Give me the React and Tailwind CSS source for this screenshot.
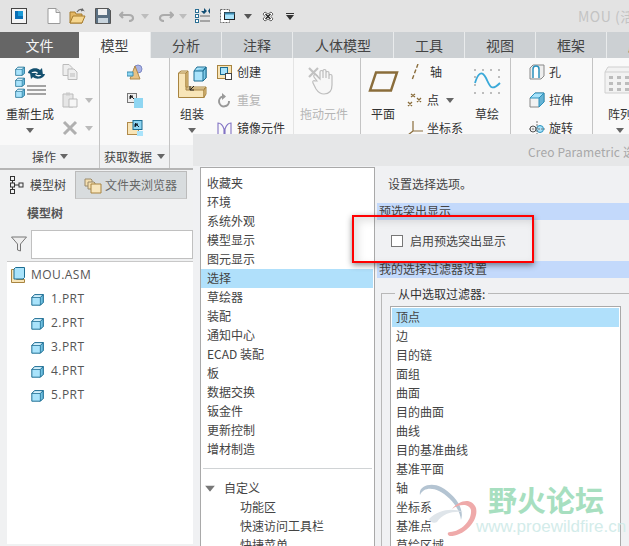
import React from "react";

const Cube = ({ s = 16, front = "#a9e3fb", top = "#d8f3fe", side = "#6fc0e0", stroke = "#1c6d92" }) => (
  <svg width={s} height={s} viewBox="0 0 16 16" className="block shrink-0">
    <path d="M1 5.500 4.500 2H15v9.500L11.500 15H1z" fill={front} stroke={stroke} strokeWidth="1.200" />
    <path d="M1 5.500 4.500 2H15l-3.500 3.500z" fill={top} stroke={stroke} strokeWidth="1" />
    <path d="M11.500 5.500 15 2v9.500L11.500 15z" fill={side} stroke={stroke} strokeWidth="1" />
  </svg>
);
const Caret = ({ c = "#666", className = "" }) => (
  <svg width="8" height="5" viewBox="0 0 8 5" className={"block shrink-0 " + className}><path d="M0 0h8L4 5z" fill={c} /></svg>
);
const Big = ({ w, label, icon, caret, gray, iconClass = "" }) => (
  <div className="flex flex-col items-center shrink-0" style={{ width: w }}>
    <div className={"h-[47px] flex items-center justify-center " + iconClass}>{icon}</div>
    <div className={"h-[18px] leading-[18px] whitespace-nowrap " + (gray ? "text-[#b5b5b5]" : "text-[#333]")}>{label}</div>
    {caret && <Caret className="mt-[5px]" />}
  </div>
);
const Row = ({ icon, label, gray, caret, gap = "gap-[5px]" }) => (
  <div className={"h-[28px] flex items-center whitespace-nowrap " + gap}>
    {icon}
    <span className={gray ? "text-[#b5b5b5]" : "text-[#333]"}>{label}</span>
    {caret && <Caret className="ml-[2px]" />}
  </div>
);

const Toolbar = () => (
  <div className="h-[32px] bg-[#e3e3e3] flex items-center pl-[11px] relative">
    <svg width="16" height="16" viewBox="0 0 16 16" className="shrink-0"><rect x=".5" y=".5" width="15" height="15" fill="#f5f5f5" stroke="#444" /><rect x="4" y="3" width="8" height="8" fill="#1a9ad6" /><path d="M4 11h8V8H7V3H4z" fill="#0a6fb5"/></svg>
    <div className="w-px h-[24px] bg-[#b3b3b3] ml-[12px]" />
    <svg width="14" height="16" viewBox="0 0 14 16" className="ml-[8px] shrink-0"><path d="M1 .5h8l4 4v11H1z" fill="#fff" stroke="#9a9a9a" /><path d="M9 .5v4h4" fill="#e5e5e5" stroke="#9a9a9a" /></svg>
    <svg width="17" height="16" viewBox="0 0 17 16" className="ml-[8px] shrink-0"><path d="M1 4h5l1 2h6v9H1z" fill="#e3b765" stroke="#a67c2e" /><path d="M1 15l3-7h12l-3 7z" fill="#f6d68e" stroke="#a67c2e" /><path d="M8 4c2-3 4-3 6-2l-1-1.500M14 2l-2 1" fill="none" stroke="#666" strokeWidth="1.200" /></svg>
    <svg width="16" height="16" viewBox="0 0 16 16" className="ml-[9px] shrink-0"><path d="M.5.500h13l2 2v13H.5z" fill="#5b7082" stroke="#555" /><rect x="3" y="1" width="9" height="6" fill="#f0f0f0" /><rect x="3" y="10" width="10" height="5" fill="#c8d4dd" /></svg>
    <svg width="16" height="12" viewBox="0 0 16 12" className="ml-[8px] shrink-0"><path d="M4 2 1 5l3 3M1.500 5H10c3 0 4 2 4 3.500S12 11 10 11" fill="none" stroke="#ababab" strokeWidth="2.200" /></svg>
    <Caret c="#bdbdbd" className="ml-[6px]" />
    <svg width="16" height="12" viewBox="0 0 16 12" className="ml-[9px] shrink-0"><path d="M12 2l3 3-3 3M14.500 5H6C3 5 2 7 2 8.500S4 11 6 11" fill="none" stroke="#ababab" strokeWidth="2.200" /></svg>
    <Caret c="#bdbdbd" className="ml-[5px]" />
    <svg width="16" height="16" viewBox="0 0 16 16" className="ml-[8px] shrink-0"><g fill="#fff" stroke="#2a6f94"><rect x=".5" y="1.500" width="3" height="3"/><rect x=".5" y="6.500" width="3" height="3"/><rect x=".5" y="11.500" width="3" height="3"/></g><path d="M5 8h10M5 13h10" stroke="#666" /><path d="M6 3h3V0l3 3-3 3zM15 0v6l-2-3z" fill="#124f75"/></svg>
    <svg width="15" height="15" viewBox="0 0 15 15" className="ml-[9px] shrink-0"><rect x=".5" y=".5" width="9" height="13" fill="#fff" stroke="#666" strokeDasharray="2 1" /><rect x="4.500" y="3.500" width="10" height="7" fill="#a9e3fb" stroke="#222" /><path d="M4.500 3.500h10v2h-10z" fill="#3d8ab0"/></svg>
    <Caret c="#555" className="ml-[9px]" />
    <svg width="12" height="11" viewBox="0 0 12 11" className="ml-[10px] shrink-0"><path d="M1 3l2-2 3 2 3-2 2 2-2 2.500 2 2.500-2 2-3-2-3 2-2-2 2-2.500z" fill="#fff" stroke="#666" /><path d="M3.500 3l5 5M8.500 3l-5 5" stroke="#222" strokeWidth="1.400" /></svg>
    <div className="w-px h-[24px] bg-[#b3b3b3] ml-[5px]" />
    <div className="ml-[7px] flex flex-col items-center gap-[1px]"><div className="w-[8px] h-px bg-[#333]" /><Caret c="#333" /></div>
    <div className="ml-[284px] text-[#c3c3c3] text-[14px] whitespace-nowrap tracking-[0.5px]">MOU (活</div>
  </div>
);

const Tab = ({ w, label, active }) => (
  <div className={"h-[26px] flex items-center justify-center shrink-0 text-[14px] text-[#444] " + (active ? "bg-[#f9f9f9]" : "bg-[#ccd0d3]")} style={{ width: w }}>{label}</div>
);
const Tabs = () => (
  <div className="h-[26px] flex gap-px bg-[#e9ebec] whitespace-nowrap">
    <div className="w-[79px] -mr-px bg-[#666] text-[#f5f5f5] text-[14px] flex items-center justify-center shrink-0">文件</div>
    <Tab w={71} label="模型" active />
    <Tab w={70} label="分析" /><Tab w={70} label="注释" /><Tab w={100} label="人体模型" />
    <Tab w={70} label="工具" /><Tab w={70} label="视图" /><Tab w={70} label="框架" /><Tab w={70} label="应用" />
  </div>
);

const Ribbon = () => (
  <div className="h-[87px] bg-[#f9f9f9] flex overflow-hidden text-[12px]">
    <div className="w-[100px] shrink-0 border-r border-[#c4c4c4] flex pl-[5px]">
      <Big w={50} label="重新生成" caret icon={
        <div className="flex gap-[2px]">
          <div className="flex flex-col gap-[1px]"><Cube s={10} /><Cube s={10} /><Cube s={10} /></div>
          <svg width="19" height="31" viewBox="0 0 19 31" className="shrink-0"><path d="M1 7c1-5 9-6 12-3l2-2 1 7h-7l2-2c-2-2-6-2-7 1zM18 8c-1 5-9 6-12 3l-2 2-1-6h7l-2 2c2 2 6 2 7-1z" fill="#14506f"/><path d="M0 20h19M0 24h19M0 28h19" stroke="#a3a3a3" strokeWidth="1.800"/></svg>
        </div>
      } />
      <div className="ml-[7px] text-[#999]">
        <div className="h-[28px] flex items-center"><svg width="16" height="16" viewBox="0 0 16 16"><path d="M1 .5h6l3 3v8H1z" fill="#eee" stroke="#bbb"/><path d="M6 5h6l3 3v7.500H6z" fill="#eee" stroke="#bbb"/><path d="M8 10h5M8 12h5" stroke="#bbb"/></svg></div>
        <div className="h-[28px] flex items-center gap-[7px]"><svg width="16" height="16" viewBox="0 0 16 16"><path d="M1 2h10v13H1z" fill="#e6e6e6" stroke="#bbb"/><rect x="4" y=".5" width="4" height="3" fill="#ccc"/><path d="M7 7h8v8H7z" fill="#f6f6f6" stroke="#bbb"/></svg><Caret c="#bbb" /></div>
        <div className="h-[28px] flex items-center gap-[7px]"><svg width="16" height="16" viewBox="0 0 16 16"><path d="M2 2l12 12M14 2 2 14" stroke="#b0b0b0" strokeWidth="3"/></svg><Caret c="#bbb" /></div>
      </div>
    </div>
    <div className="w-[70px] shrink-0 border-r border-[#c4c4c4] flex flex-col items-center">
      <div className="h-[28px] flex items-center"><svg width="16" height="16" viewBox="0 0 16 16"><circle cx="11" cy="5" r="4" fill="#aab4e6" stroke="#7f89c4"/><path d="M8 2 3 15h10z" fill="#e8c284" stroke="#b08a4a"/><path d="M0 8h6v4H0z" fill="#8fd6f2" stroke="#3b8db0"/></svg></div>
      <div className="h-[28px] flex items-center"><svg width="16" height="16" viewBox="0 0 16 16"><rect x=".5" y="1.500" width="9" height="9" fill="#eee" stroke="#777"/><path d="M3 3l4 4M3 7V4h3" stroke="#222"/><rect x="7" y="6" width="9" height="10" fill="#8fd6f2"/></svg></div>
      <div className="h-[28px] flex items-center"><svg width="16" height="16" viewBox="0 0 16 16"><rect x=".5" y="2.500" width="11" height="12" fill="#f8e5b8" stroke="#b08a4a"/><rect x="6" y=".5" width="9" height="9" fill="#8fd6f2" stroke="#1c6d92"/><path d="M8 3l4 4M8 7V4h3" stroke="#123"/><rect x="10" y="11" width="6" height="5" fill="#a9e3fb"/></svg></div>
    </div>
    <div className="w-[191px] shrink-0 border-r border-[#c4c4c4] flex">
      <Big w={44} label="组装" caret icon={
        <svg width="29" height="32" viewBox="0 0 29 32"><path d="M.5 7 3 5h7l-2 2v14h20l-2 2H8" fill="#fbeec8" stroke="#a88440"/><path d="M.5 7H8v17h18v7.500H.5z" fill="#f8e5b8" stroke="#a88440"/><path d="M26 24l2-3v7l-2 3.500z" fill="#e6c98a" stroke="#a88440"/><path d="M8 7l2-2v16H8z" fill="#e6c98a" stroke="#a88440"/><path d="M16 5l3-4h9v11l-3 3h-9z" fill="#a9e3fb" stroke="#1c6d92"/><path d="M25 15V5l3-4v11zM16 5h9l3-4" fill="#7cc8e6" stroke="#1c6d92"/><path d="M12 24l4-4M12 20v4h4" stroke="#222" fill="none"/></svg>
      } />
      <div className="w-[77px] ml-[3px] border-r border-[#e4e4e4] shrink-0">
        <Row label="创建" icon={<svg width="15" height="15" viewBox="0 0 15 15" className="shrink-0"><rect x=".5" y=".5" width="14" height="13" fill="#f8e5b8" stroke="#a88440"/><rect x="3.500" y="2.500" width="7" height="7" fill="#a9e3fb" stroke="#1c6d92"/><rect x="8.500" y="8.500" width="6" height="6" fill="#fff" stroke="#444"/></svg>} />
        <Row gray label="重复" icon={<svg width="15" height="15" viewBox="0 0 15 15" className="shrink-0"><path d="M6 3.500A5 5 0 1 0 12 8" fill="none" stroke="#999" strokeWidth="2"/><path d="M5 0v7l4-3.500z" fill="#999"/></svg>} />
        <Row label="镜像元件" icon={<svg width="15" height="15" viewBox="0 0 15 15" className="shrink-0"><path d="M1 15V2c3 0 5 3 6 6v7M14 15V2c-3 0-5 3-6 6v7" fill="none" stroke="#8273c4" strokeWidth="1.100"/></svg>} />
      </div>
      <Big w={60} iconClass="ml-[-4px]" gray label="拖动元件" icon={
        <svg width="28" height="30" viewBox="0 0 28 30"><path d="M1 1l9 9M10 1 1 10" stroke="#c2c2c2" strokeWidth="2.200"/><path d="M9 14l-3-4c-1-2 1-3 2-2l4 4V5c0-2 3-2 3 0v6-7c0-2 3-2 3 0v7-5c0-2 3-2 3 0v6-3c0-2 3-2 3 0v9c0 6-3 9-8 9-4 0-6-2-8-5l-3-6c-1-2 1-3 2-2z" fill="#f7f7f7" stroke="#bdbdbd" strokeWidth="1.200"/></svg>
      } />
    </div>
    <div className="w-[150px] shrink-0 border-r border-[#c4c4c4] flex">
      <Big w={44} label="平面" icon={<svg width="31" height="21" viewBox="0 0 31 21"><path d="M8 1.500h21L23 19.500H2z" fill="none" stroke="#8a6d3b" strokeWidth="2.400"/></svg>} />
      <div className="w-[56px] ml-[2px] shrink-0">
        <Row label="轴" gap="gap-[7px]" icon={<svg width="13" height="16" viewBox="0 0 13 16" className="ml-[3px] shrink-0"><path d="M8 0 2 16" stroke="#8a6d3b" strokeWidth="1.400" strokeDasharray="4 2"/></svg>} />
        <Row label="点" caret gap="gap-[5px]" icon={<svg width="15" height="14" viewBox="0 0 15 14" className="shrink-0"><path d="M4 1l4 3M8 1 4 4M10 5l4 4M14 5l-4 4M1 9l4 4M5 9l-4 4" stroke="#8a6d3b" strokeWidth="1.300"/></svg>} />
        <Row label="坐标系" gap="gap-[4px]" icon={<svg width="16" height="15" viewBox="0 0 16 15" className="shrink-0"><path d="M6 0v10M6 10h10M6 10l-5 4" stroke="#8a6d3b" strokeWidth="1.200" fill="none"/></svg>} />
      </div>
      <Big w={48} label="草绘" icon={<svg width="27" height="26" viewBox="0 0 27 26"><path d="M1 13c3-10 7-13 11-5s5 14 14 5" fill="none" stroke="#3aa9d9" strokeWidth="1.800" transform="translate(0 1)"/><g fill="#555"><circle cx="1" cy="1" r=".7"/><circle cx="9" cy="1" r=".7"/><circle cx="17" cy="1" r=".7"/><circle cx="25" cy="1" r=".7"/><circle cx="1" cy="24" r=".7"/><circle cx="9" cy="24" r=".7"/><circle cx="17" cy="24" r=".7"/><circle cx="25" cy="24" r=".7"/><circle cx="1" cy="8" r=".7"/><circle cx="25" cy="8" r=".7"/><circle cx="1" cy="16" r=".7"/></g></svg>} />
    </div>
    <div className="w-[82px] shrink-0 border-r border-[#c4c4c4] pl-[18px]">
      <Row label="孔" gap="gap-[4px]" icon={<svg width="16" height="16" viewBox="0 0 16 16" className="shrink-0"><path d="M1 4l3-3h11v11l-3 3H1z" fill="#eee" stroke="#888"/><path d="M4 14V5a3 3 0 0 1 6 0v9" fill="#fff" stroke="#2a91bd" strokeWidth="1.500"/></svg>} />
      <Row label="拉伸" gap="gap-[4px]" icon={<svg width="16" height="16" viewBox="0 0 16 16" className="shrink-0"><path d="M1 6l5-5h9v9l-5 5H1z" fill="#f2f2f2" stroke="#888"/><path d="M1 6l5-5h9l-5 5z" fill="#a9e3fb" stroke="#2a91bd"/><path d="M10 6l5-5v9l-5 5z" fill="#66b3d4" stroke="#2a91bd"/></svg>} />
      <Row label="旋转" gap="gap-[4px]" icon={<svg width="16" height="14" viewBox="0 0 16 14" className="shrink-0"><circle cx="4" cy="8" r="3" fill="#eee" stroke="#555"/><circle cx="11" cy="8" r="3.500" fill="#a9e3fb" stroke="#2a91bd"/><path d="M0 8h16M8 0v14" stroke="#777" strokeDasharray="2 1"/></svg>} />
    </div>
    <div className="w-[54px] shrink-0">
      <Big w={54} label="阵列" caret icon={<svg width="32" height="31" viewBox="0 0 32 31"><path d="M1 6l3-5h30v26H1z" fill="#f2f2f2" stroke="#cfcfcf"/><path d="M1 6h30l3-5" fill="none" stroke="#cfcfcf"/><g fill="#bcbcbc"><rect x="5" y="10" width="4" height="3"/><rect x="13" y="10" width="4" height="3"/><rect x="21" y="10" width="4" height="3"/><rect x="5" y="16" width="4" height="3"/><rect x="13" y="16" width="4" height="3"/><rect x="21" y="16" width="4" height="3"/><rect x="5" y="22" width="4" height="3"/><rect x="13" y="22" width="4" height="3"/><rect x="21" y="22" width="4" height="3"/></g></svg>} />
    </div>
  </div>
);

const GroupLabels = () => (
  <div className="h-[25px] bg-[#f0f1f2] flex text-[12px] text-[#444] border-b-2 border-[#b5b5b5]">
    <div className="w-[100px] shrink-0 border-r border-[#c4c4c4] flex items-center justify-center gap-[4px] pl-[1px]">操作<Caret /></div>
    <div className="w-[70px] shrink-0 border-r border-[#c4c4c4] flex items-center justify-center gap-[5px] whitespace-nowrap">获取数据<Caret /></div>
  </div>
);

const Side = () => (
  <div className="w-[195px] h-[374px] bg-[#f0f1f2] text-[12px] text-[#444]">
    <div className="h-[29px] flex items-end">
      <div className="w-[75px] h-[29px] bg-[#f0f1f2] flex items-center pl-[10px] gap-[6px]">
        <svg width="14" height="18" viewBox="0 0 14 18"><g fill="none" stroke="#333"><rect x=".5" y=".5" width="4" height="4"/><rect x=".5" y="7" width="4" height="4"/><rect x=".5" y="13.500" width="4" height="4"/><rect x="9" y="7" width="4" height="4"/><path d="M4.500 9H9M2.500 4.500V7M2.500 11v2.500"/></g></svg>
        <span className="whitespace-nowrap">模型树</span>
      </div>
      <div className="w-[112px] h-[28px] bg-[#d8dcde] border border-[#bbb] border-b-[#c8c8c8] flex items-center pl-[8px] gap-[3px] text-[#666]">
        <svg width="18" height="18" viewBox="0 0 18 18" className="shrink-0"><path d="M1 3h6l1 1v6H1z" fill="#f4dfb0" stroke="#9a8a6a"/><path d="M4 6h6l1 1v6H4z" fill="#f4dfb0" stroke="#9a8a6a"/><path d="M7 8h10v9H7z" fill="#f8e6bc" stroke="#a88440"/></svg>
        <span className="whitespace-nowrap">文件夹浏览器</span>
      </div>
    </div>
    <div className="h-[28px] pl-[27px] flex items-center font-bold text-[#555]">模型树</div>
    <div className="h-[34px] flex items-center pl-[11px] gap-[4px]">
      <svg width="16" height="16" viewBox="0 0 16 16" className="shrink-0"><path d="M.5 1h15l-6 7v7l-3-1V8z" fill="#eee" stroke="#777"/></svg>
      <div className="w-[162px] h-[29px] bg-white border border-[#c0c0c0]" />
    </div>
    <div className="ml-[7px] w-[186px] h-[283px] bg-white border-t border-[#c8c8c8] pt-[1px] text-[#555] tracking-[0.45px]" style={{ fontFamily: '"Open Sans","Noto Sans CJK SC",sans-serif' }}>
      <div className="h-[24px] flex items-center pl-[4px] gap-[6px]"><svg width="14" height="16" viewBox="0 0 14 16"><path d="M.5 2.500h5v10h8v3H.5z" fill="#f8e5b8" stroke="#a88440"/><path d="M3 2 4.500.5h9v10L12 12H3z" fill="#a9e3fb" stroke="#1c6d92"/></svg>MOU.ASM</div>
      {["1.PRT", "2.PRT", "3.PRT", "4.PRT", "5.PRT"].map((t) => (
        <div key={t} className="h-[24px] flex items-center pl-[24px] gap-[7px]"><Cube s={13} />{t}</div>
      ))}
    </div>
  </div>
);

const cats = ["收藏夹", "环境", "系统外观", "模型显示", "图元显示", "选择", "草绘器", "装配", "通知中心", "ECAD 装配", "板", "数据交换", "钣金件", "更新控制", "增材制造"];
const filters = ["顶点", "边", "目的链", "面组", "曲面", "目的曲面", "曲线", "目的基准曲线", "基准平面", "轴", "坐标系", "基准点", "草绘区域"];

const Dialog = () => (
  <div className="absolute left-[193px] top-[134px] right-0 bottom-0 bg-[#f0f1f3] text-[12px] text-[#444]">
    <div className="h-[32px] bg-[#e6e7e8] pl-[335px] pt-[10px] leading-[16px] text-[#a8a8a8] whitespace-nowrap tracking-[0.15px]">Creo Parametric 选项</div>
    <div className="flex pl-[7px] pt-[1px] h-[380px]">
      <div className="w-[175px] h-[390px] shrink-0 bg-white border border-[#a9a9a9] pt-[6px] overflow-hidden">
        {cats.map((c) => (
          <div key={c} className={"h-[19px] leading-[18px] pl-[6px] " + (c === "选择" ? "bg-[#b0e0fb] w-[172px]" : "")}>{c}</div>
        ))}
        <div className="h-px bg-[#d0d3d5] mx-[2px] mt-[9px]" />
        <div className="mt-[10px] h-[19px] flex items-center pl-[5px] gap-[10px] pb-[1px]"><Caret c="#777" className="scale-125" />自定义</div>
        <div className="h-[19px] leading-[18px] pl-[39px]">功能区</div>
        <div className="h-[19px] leading-[18px] pl-[39px]">快速访问工具栏</div>
        <div className="h-[19px] leading-[18px] pl-[39px]">快捷菜单</div>
      </div>
      <div className="ml-[2px] flex-1 min-w-0">
        <div className="h-[36px] pl-[11px] leading-[34px]">设置选择选项。</div>
        <div className="h-[17px] bg-[#c3d9fb] pl-[2px] leading-[16px]">预选突出显示</div>
        <div className="h-[41px] flex items-center pl-[14px] gap-[7px]">
          <div className="w-[12px] h-[12px] bg-white border border-[#777] shrink-0" />启用预选突出显示
        </div>
        <div className="h-[17px] bg-[#c3d9fb] pl-[2px] leading-[16px]">我的选择过滤器设置</div>
        <div className="relative ml-[4px] mt-[15px] w-[260px] h-[260px] border border-[#b8b8b8] pt-[12px] pl-[8px]">
          <div className="absolute left-[13px] -top-[9px] bg-[#f0f1f3] px-[3px] leading-[18px] whitespace-nowrap text-[#333]">从中选取过滤器:</div>
          <div className="w-[231px] h-[250px] bg-white border border-[#a9a9a9] overflow-hidden p-px">
            {filters.map((f) => (
              <div key={f} className={"h-[19px] leading-[18px] pl-[4px] " + (f === "顶点" ? "bg-[#b0e0fb]" : "")}>{f}</div>
            ))}
          </div>
        </div>
      </div>
    </div>
  </div>
);

export default function App() {
  return (
    <div className="relative w-[629px] h-[546px] overflow-hidden bg-[#f0f1f2] text-[12px]" style={{ fontFamily: '"Noto Sans CJK SC","Open Sans",sans-serif' }}>
      <Toolbar />
      <Tabs />
      <Ribbon />
      <GroupLabels />
      <Side />
      <Dialog />
      <div className="absolute left-[352px] top-[215px] w-[182px] h-[48px] border-[2px] border-[#f00] shadow-[0_2px_6px_rgba(0,0,0,0.45),inset_4px_4px_8px_rgba(0,0,0,0.12)]" />
      <svg width="62" height="56" viewBox="0 0 62 56" className="absolute left-[417px] top-[482px]">
        <path d="M3 13C1 4 14 0 24 5c13 7 24 21 20 33C43 26 32 14 22 9 14 5 6 6 3 13z" fill="#b4c4d2" />
        <path d="M35 27c7-9 20-12 24-1 3 12-11 28-26 28-3-1-3-4 0-4 12-1 22-12 21-22-2-7-12-6-19-1z" fill="#efaaaa" />
        <path d="M12 37c10-10 24-11 34-7-10-1-20 1-26 10-3 2-7 0-8-3z" fill="#dfe5ea" />
      </svg>
      <div className="absolute left-[488px] top-[484px] text-[29px] leading-[30px] font-bold text-[#a7dfc0] whitespace-nowrap">野火论坛</div>
      <div className="absolute left-[476px] top-[517px] text-[17px] leading-[20px] text-[#d3ecea] whitespace-nowrap" style={{ fontFamily: '"Liberation Sans",sans-serif' }}>www.proewildfire.cn</div>
    </div>
  );
}
